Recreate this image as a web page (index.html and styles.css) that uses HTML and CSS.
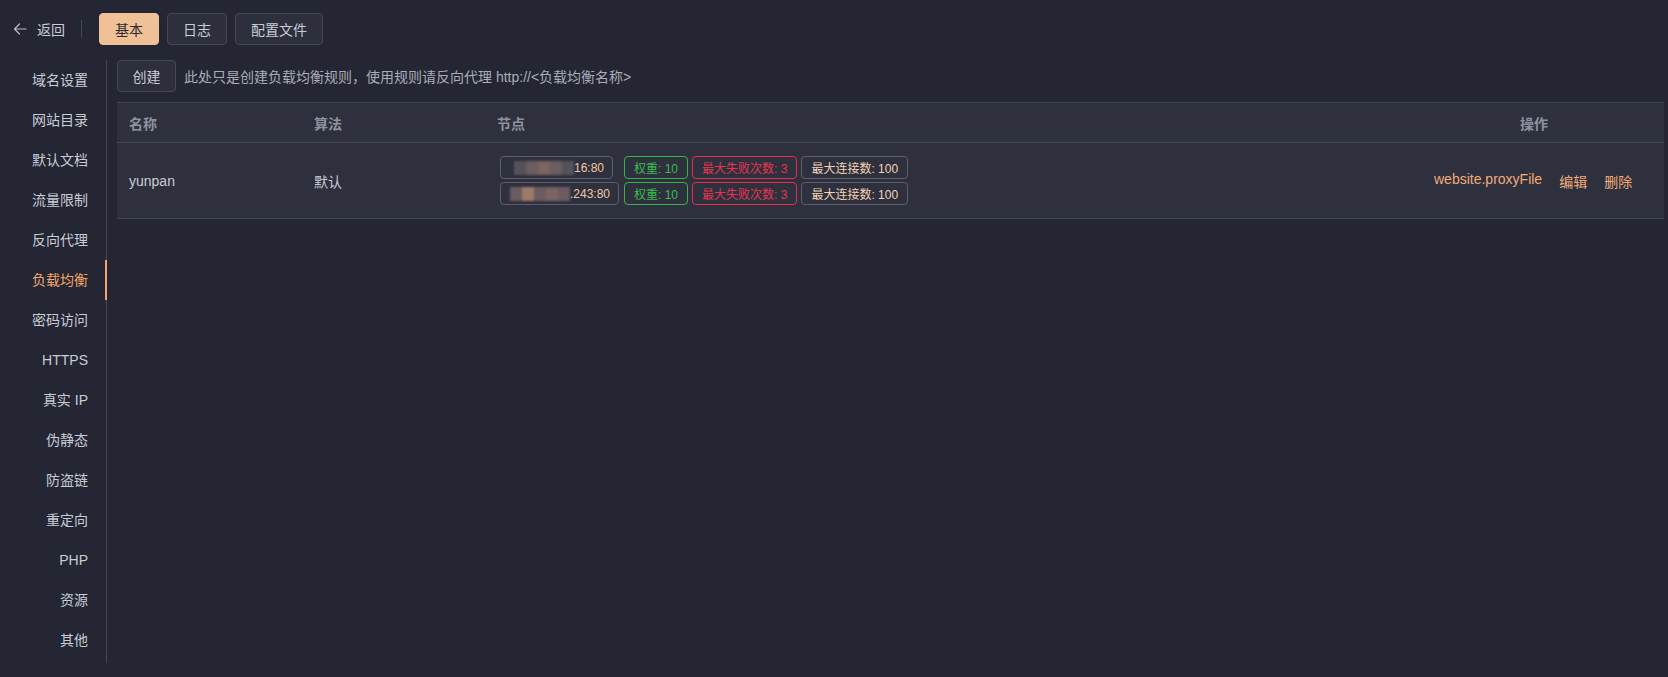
FILE: index.html
```html
<!DOCTYPE html>
<html lang="zh-CN">
<head>
<meta charset="utf-8">
<title>负载均衡</title>
<link rel="stylesheet" href="styles.css">
</head>
<body>
<div class="topbar">
  <a class="back">
    <svg class="back-icon" viewBox="0 0 14 14" width="14" height="14"><path d="M13 7H1.5M6.5 2L1.5 7l5 5" fill="none" stroke="#b9bdc7" stroke-width="1.2" stroke-linecap="round" stroke-linejoin="round"/></svg>
    <span>返回</span>
  </a>
  <span class="vdiv"></span>
  <button class="tab active">基本</button>
  <button class="tab">日志</button>
  <button class="tab">配置文件</button>
</div>
<div class="main">
  <nav class="side">
    <div class="side-item">域名设置</div>
    <div class="side-item">网站目录</div>
    <div class="side-item">默认文档</div>
    <div class="side-item">流量限制</div>
    <div class="side-item">反向代理</div>
    <div class="side-item active">负载均衡</div>
    <div class="side-item">密码访问</div>
    <div class="side-item">HTTPS</div>
    <div class="side-item">真实 IP</div>
    <div class="side-item">伪静态</div>
    <div class="side-item">防盗链</div>
    <div class="side-item">重定向</div>
    <div class="side-item">PHP</div>
    <div class="side-item">资源</div>
    <div class="side-item">其他</div>
  </nav>
  <section class="content">
    <div class="toolbar">
      <button class="btn">创建</button>
      <span class="hint">此处只是创建负载均衡规则，使用规则请反向代理 http://&lt;负载均衡名称&gt;</span>
    </div>
    <div class="table">
      <div class="row head">
        <div class="c-name">名称</div>
        <div class="c-algo">算法</div>
        <div class="c-node">节点</div>
        <div class="c-op">操作</div>
      </div>
      <div class="row body">
        <div class="c-name">yunpan</div>
        <div class="c-algo">默认</div>
        <div class="c-node">
          <div class="node-line">
            <span class="tag ip ip1"><span class="mosaic"><i class="m1"></i><i class="m2"></i><i class="m3"></i><i class="m2"></i><i class="m1"></i></span>16:80</span>
            <span class="tag green">权重: 10</span>
            <span class="tag red">最大失败次数: 3</span>
            <span class="tag grey">最大连接数: 100</span>
          </div>
          <div class="node-line">
            <span class="tag ip ip2"><span class="mosaic"><i class="m2"></i><i class="m4"></i><i class="m2"></i><i class="m3"></i><i class="m2"></i></span>.243:80</span>
            <span class="tag green">权重: 10</span>
            <span class="tag red">最大失败次数: 3</span>
            <span class="tag grey">最大连接数: 100</span>
          </div>
        </div>
        <div class="c-op">
          <a class="link">website.proxyFile</a>
          <a class="link">编辑</a>
          <a class="link">删除</a>
        </div>
      </div>
    </div>
  </section>
</div>
</body>
</html>
```
FILE: styles.css
```css
* { box-sizing: border-box; }
html, body { margin: 0; padding: 0; }
body {
  background: #242633;
  color: #c8ccd6;
  font-family: "Liberation Sans", "Noto Sans CJK SC", Arial, sans-serif;
  font-size: 14px;
  width: 1668px;
  height: 677px;
  overflow: hidden;
}
button { font-family: inherit; }

.topbar {
  display: flex;
  align-items: center;
  height: 44px;
  padding: 13px 0 0 12px;
}
.back {
  display: flex;
  align-items: center;
  gap: 10px;
  color: #c8ccd6;
  font-size: 14px;
}
.back-icon { display: block; margin-left: 1px; }
.vdiv {
  width: 1px;
  height: 18px;
  background: #43465a;
  margin: 0 17px 0 16px;
}
.tab {
  height: 32px;
  padding: 0 15px;
  margin-right: 8px;
  border: 1px solid #444759;
  border-radius: 4px;
  background: #2d2f3d;
  color: #c8ccd6;
  font-size: 14px;
}
.tab.active {
  background: #f0c097;
  border-color: #f0c097;
  color: #2a2b33;
}
.tab:first-of-type { width: 60px; }

.main {
  display: flex;
  margin-top: 16px;
}
.side {
  width: 107px;
  height: 603px;
  border-right: 1px solid #44465a;
}
.side-item {
  height: 40px;
  line-height: 40px;
  text-align: right;
  padding-right: 18px;
  color: #c8ccd6;
  font-size: 14px;
}
.side-item.active {
  color: #f2a66c;
  box-shadow: inset -2px 0 0 #f2a66c;
  margin-right: -1px;
  padding-right: 19px;
}

.content {
  flex: 1;
  padding-left: 10px;
  padding-right: 4px;
}
.toolbar {
  display: flex;
  align-items: center;
  gap: 8px;
  height: 32px;
}
.btn {
  height: 32px;
  width: 59px;
  border: 1px solid #444759;
  border-radius: 4px;
  background: #2d2f3d;
  color: #c8ccd6;
  font-size: 14px;
  padding: 0;
}
.hint { color: #a9adb8; font-size: 14px; }

.table {
  margin-top: 10px;
  background: #2e303e;
  border-top: 1px solid #43465a;
}
.row {
  display: flex;
  align-items: center;
  border-bottom: 1px solid #43465a;
}
.row.head {
  height: 40px;
  color: #8d929e;
  font-weight: bold;
  font-size: 14px;
}
.row.body {
  height: 76px;
  color: #c8ccd6;
}
.c-name { width: 197px; padding-left: 12px; }
.c-algo { width: 183px; }
.c-node { flex: 1; }
.c-op { width: 230px; }
.row.head .c-op { padding-left: 86px; }
.row.body .c-op { display: flex; gap: 17px; }
.link { color: #f2ab78; }

.node-line {
  display: flex;
  gap: 4px;
  margin: 3px 0 3px 3px;
}
.tag {
  display: inline-flex;
  align-items: center;
  height: 23px;
  padding: 0 9px;
  border: 1px solid #5b5e6b;
  border-radius: 4px;
  font-size: 12px;
  color: #f1c9a1;
  white-space: nowrap;
}
.tag.ip { justify-content: flex-end; padding-right: 8px; }
.tag.ip1 { width: 113px; margin-right: 7px; }
.tag.ip2 { width: 119px; margin-right: 1px; }
.tag.green { border-color: #35b34a; color: #3bbd50; }
.tag.red { border-color: #e0304a; color: #e8344f; }
.tag.grey { border-color: #5b5e6b; color: #f1d2b4; }
.mosaic {
  display: flex;
  height: 14px;
  filter: blur(1px);
}
.mosaic i { display: block; width: 12px; height: 14px; }
.m1 { background: #55525c; }
.m2 { background: #6a5c60; }
.m3 { background: #7a6360; }
.m4 { background: #a07a66; }
```
